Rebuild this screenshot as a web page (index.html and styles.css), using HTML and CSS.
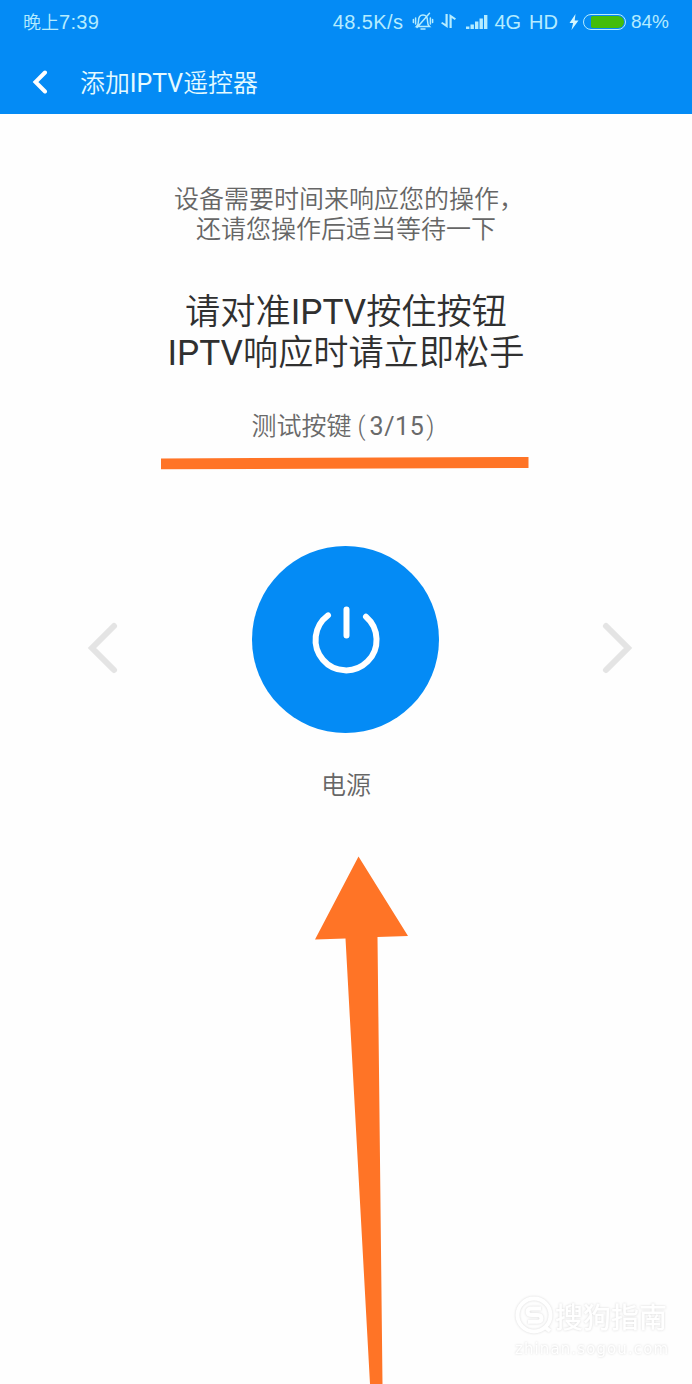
FILE: index.html
```html
<!DOCTYPE html>
<html lang="zh-CN">
<head>
    <meta charset="UTF-8">
    <title>添加IPTV遥控器</title>
    <link rel="stylesheet" href="styles.css">
</head>
<body>
    <header class="header">
        <div class="status-bar">
            <span class="clock">晚上<span class="time">7:39</span></span>
            <div class="status-icons">
                <span class="speed">48.5K/s</span>
                <svg class="icon-bell" width="22" height="20" viewBox="0 0 22 20" fill="none" stroke="#b5ecff" stroke-width="1.5" stroke-linecap="round">
                    <path d="M4.500 14.500c1.700-1.500 2-3 2-5.500C6.500 5.500 8 3 11 3s4.500 2.500 4.500 6c0 2.500.3 4 2 5.500zM9 17h4M5 15.500L17.500 1.300M3.600 6v6M1.400 7.500v3M18.400 6v6M20.600 7.500v3"/>
                </svg>
                <svg class="icon-data" width="17" height="16" viewBox="0 0 17 16" fill="#b5ecff">
                    <path d="M5.500 0h2.200v14L1 9.300l1.200-1.400 3.300 2.200zM9.500 0L16 4.500l-1.200 1.500-3.100-1.900V14H9.500z"/>
                </svg>
                <svg class="icon-signal" width="22" height="16" viewBox="0 0 22 16" fill="#b5ecff">
                    <path d="M0 12.500h3.400V15H0zM4.500 10.500h3.400V15H4.500zM9 7.500h3.400V15H9zM13.500 4.500h3.400V15h-3.400zM18 1h3.400v14H18z"/>
                </svg>
                <span class="network">4G</span>
                <span class="hd">HD</span>
                <svg class="icon-charge" width="10" height="16" viewBox="0 0 10 16" fill="#d5f6ff">
                    <path d="M6.500 0L.5 9h3.600L2.500 16 9.500 6.500H5.700z"/>
                </svg>
                <div class="battery"><div class="battery-level"></div></div>
                <span class="percent">84%</span>
            </div>
        </div>
        <div class="title-bar">
            <svg class="back" width="16" height="24" viewBox="0 0 16 24" fill="none" stroke="#fff" stroke-width="4" stroke-linecap="round">
                <path d="M13 2.500L3.500 12l9.500 9.500"/>
            </svg>
            <h1>添加<span class="latin">IPTV</span>遥控器</h1>
        </div>
    </header>

    <main>
        <p class="hint">设备需要时间来响应您的操作<span class="comma">，</span><br>还请您操作后适当等待一下</p>
        <h2>请对准<span class="latin">IPTV</span>按住按钮<br><span class="latin">IPTV</span>响应时请立即松手</h2>
        <p class="step">测试按键<span class="paren open">(</span><span class="count">3/15</span><span class="paren close">)</span></p>

        <div class="tester">
            <svg class="arrow" width="34" height="54" viewBox="0 0 34 54" fill="none" stroke="#e4e4e4" stroke-width="6" stroke-linecap="round">
                <path d="M28 5L6 27l22 22"/>
            </svg>
            <button class="power">
                <svg width="72" height="72" viewBox="0 0 72 72" fill="none" stroke="#fff" stroke-width="6" stroke-linecap="round">
                    <path d="M18 11.300A30.500 30.500 0 1 0 56 12.800M36.500 5.500v26"/>
                </svg>
            </button>
            <svg class="arrow" width="34" height="54" viewBox="0 0 34 54" fill="none" stroke="#e4e4e4" stroke-width="6" stroke-linecap="round">
                <path d="M6 5l22 22L6 49"/>
            </svg>
        </div>
        <p class="key-name">电源</p>
    </main>

    <!-- orange underline and arrow drawn over the page -->
    <svg class="marks" width="692" height="1384" viewBox="0 0 692 1384" fill="#ff7426">
        <path d="M161 458.500L528.500 457v11L161 469.300z"/>
        <path d="M358.500 856.500L408 936l-30.500 1 5 447H370L345.500 938.500l-30.500 1z"/>
    </svg>

    <div class="watermark">
        <div class="brand">
            <svg width="40" height="40" viewBox="0 0 40 40" fill="none" stroke="#fff">
                <circle cx="19" cy="19" r="16.500" stroke-width="4"/>
                <path d="M26 12.500H17q-4.500 0-4.500 3.300t4.500 3.300h5q4.500 0 4.500 3.300t-4.500 3.300h-9M30 31l5 4" stroke-width="4"/>
            </svg>
            <span>搜狗指南</span>
        </div>
        <div class="site">zhinan.sogou.com</div>
    </div>
</body>
</html>
```

FILE: styles.css
```css
* {
    box-sizing: border-box;
    margin: 0;
    padding: 0;
}
body {
    position: relative;
    width: 692px;
    height: 1384px;
    overflow: hidden;
    background-color: #fefefe;
    font-family: Roboto, "Noto Sans CJK SC", sans-serif;
    font-weight: 350;
}
h1, h2 {
    font-weight: 350;
}
.header {
    height: 114px;
    background-color: #048bf5;
    color: #e5faff;
}
.status-bar {
    display: flex;
    justify-content: space-between;
    height: 44px;
    padding: 0 23px;
    line-height: 44px;
    font-size: 18px;
    font-weight: 400;
    color: #b5ecff;
}
.clock {
    font-family: "Liberation Sans", "Noto Sans CJK SC", sans-serif;
    font-weight: 350;
}
.time {
    font-size: 20px;
    letter-spacing: 0.300px;
}
.status-icons {
    display: flex;
    align-items: center;
    font-family: "Liberation Sans", sans-serif;
    font-size: 20px;
}
.speed {
    letter-spacing: 0.400px;
}
.icon-bell {
    margin-left: 9px;
}
.icon-data {
    margin-left: 6px;
}
.icon-signal {
    margin: 0 6px 0 9px;
}
.hd {
    margin-left: 8px;
}
.icon-charge {
    margin-left: 11px;
}
.battery {
    display: flex;
    justify-content: flex-end;
    width: 43px;
    height: 16px;
    margin: 0 5px 0 4px;
    padding: 1px;
    border: 1px solid #b5ecff;
    border-radius: 8px;
}
.battery-level {
    width: 33px;
    background-color: #43bd0b;
    border-radius: 2px 7px 7px 2px;
}
.percent {
    font-size: 19px;
}
.title-bar {
    display: flex;
    align-items: center;
    height: 76px;
    padding-left: 32px;
}
.back {
    margin-right: 32px;
}
h1 {
    padding-top: 4px;
    font-size: 24.900px;
    line-height: 30px;
}
main {
    padding-top: 71px;
    text-align: center;
}
.hint {
    color: #666;
    font-size: 25px;
    line-height: 30px;
}
.comma {
    letter-spacing: -6px;
}
h2 {
    margin-top: 47px;
    color: #303030;
    font-size: 35.200px;
    line-height: 41px;
}
.latin {
    font-weight: 400;
}
.step {
    margin-top: 38px;
    padding-right: 6px;
    color: #6a6a6a;
    font-size: 25px;
    line-height: 30px;
}
.count {
    font-weight: 400;
    letter-spacing: 0.600px;
}
.paren {
    font-weight: 300;
}
.open {
    margin: 0 4px 0 6px;
}
.close {
    margin-left: 2px;
}
.tester {
    display: flex;
    justify-content: space-between;
    align-items: center;
    height: 187px;
    margin-top: 104px;
    padding: 0 58px 0 86px;
}
.arrow {
    margin-top: 16px;
}
.power {
    display: flex;
    justify-content: center;
    align-items: center;
    width: 187px;
    height: 187px;
    margin-right: 29px;
    border: none;
    border-radius: 50%;
    background-color: #048bf5;
}
.key-name {
    margin-top: 38px;
    color: #666;
    font-size: 25px;
    line-height: 30px;
}
.marks {
    position: absolute;
    top: 0;
    left: 0;
}
.watermark {
    position: absolute;
    left: 515px;
    top: 1297px;
    color: #fff;
    font-weight: 500;
    filter: drop-shadow(0 0 1px #d8d8d8);
}
.brand {
    display: flex;
    align-items: center;
    height: 38px;
    font-size: 28px;
}
.site {
    font-family: "DejaVu Sans", sans-serif;
    font-size: 15px;
    line-height: 28px;
    letter-spacing: 1.100px;
}
```
